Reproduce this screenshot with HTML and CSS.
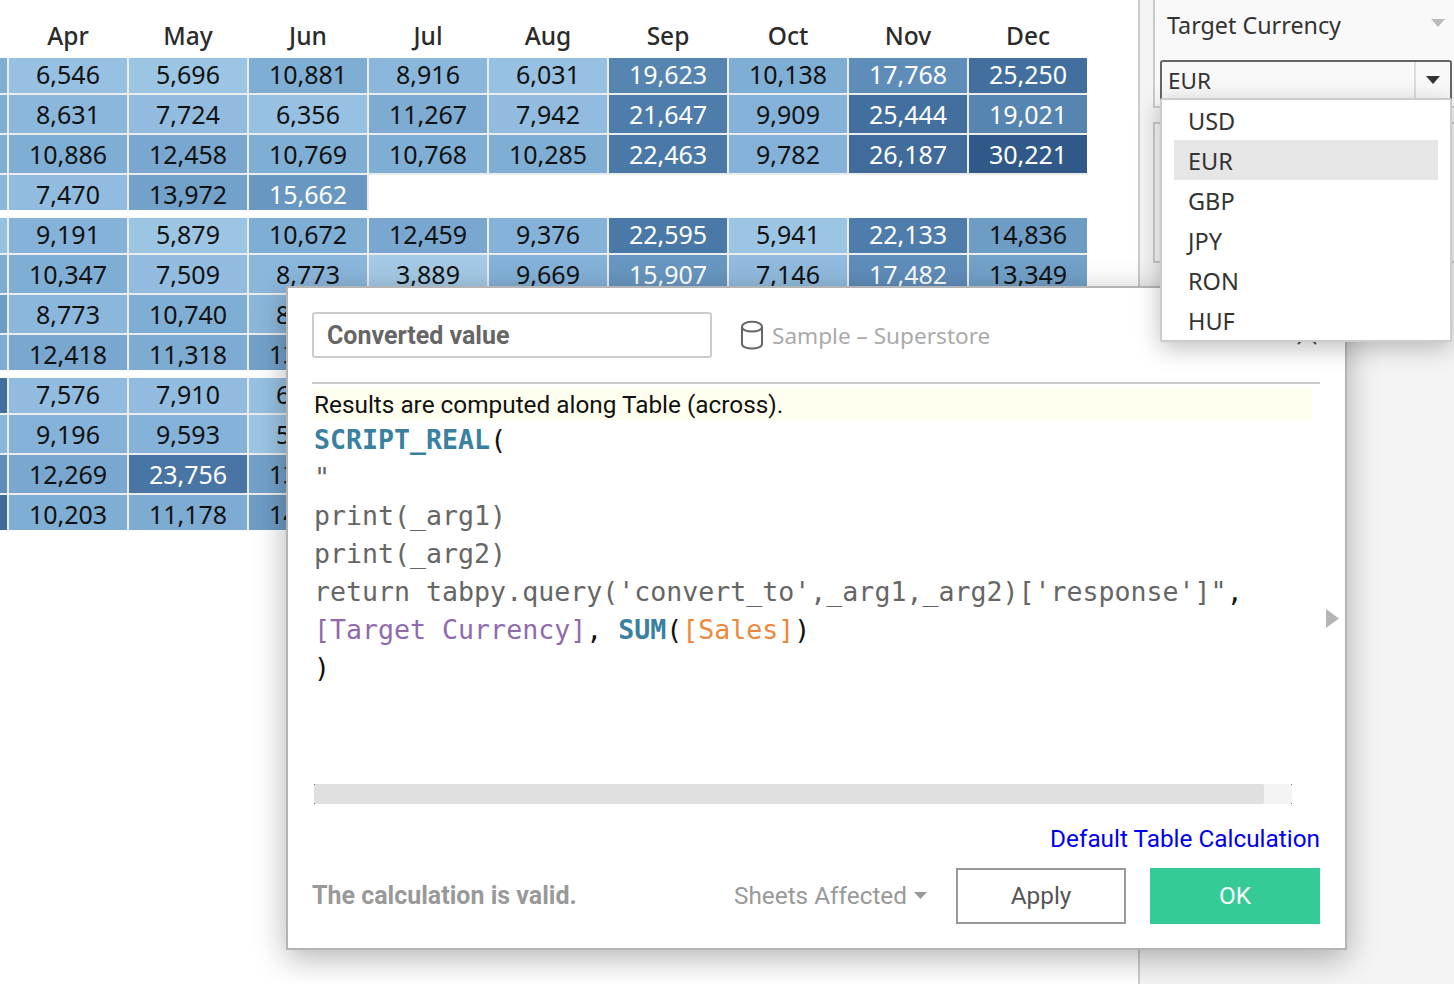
FILE: index.html
```html
<!DOCTYPE html>
<html lang="en">
<head>
<meta charset="utf-8">
<title>Converted value</title>
<link rel="stylesheet" href="styles.css">
</head>
<body>
<div class="app">
  <main class="view">
    <div class="months">
      <span></span><span>Apr</span><span>May</span><span>Jun</span><span>Jul</span><span>Aug</span><span>Sep</span><span>Oct</span><span>Nov</span><span>Dec</span>
    </div>
    <div class="group">
      <div class="top k10"></div><div class="top k6">6,546</div><div class="top k5">5,696</div><div class="top k10">10,881</div><div class="top k8">8,916</div><div class="top k6">6,031</div><div class="top k19">19,623</div><div class="top k10">10,138</div><div class="top k17">17,768</div><div class="top k25">25,250</div>
      <div class="k10"></div><div class="k8">8,631</div><div class="k7">7,724</div><div class="k6">6,356</div><div class="k11">11,267</div><div class="k7">7,942</div><div class="k21">21,647</div><div class="k9">9,909</div><div class="k25">25,444</div><div class="k19">19,021</div>
      <div class="k10"></div><div class="k10">10,886</div><div class="k12">12,458</div><div class="k10">10,769</div><div class="k10">10,768</div><div class="k10">10,285</div><div class="k22">22,463</div><div class="k9">9,782</div><div class="k26">26,187</div><div class="k30">30,221</div>
      <div class="k8"></div><div class="k7">7,470</div><div class="k13">13,972</div><div class="k15">15,662</div><div class="blank"></div>
    </div>
    <div class="group">
      <div class="top k6"></div><div class="top k9">9,191</div><div class="top k5">5,879</div><div class="top k10">10,672</div><div class="top k12">12,459</div><div class="top k9">9,376</div><div class="top k22">22,595</div><div class="top k5">5,941</div><div class="top k21">22,133</div><div class="top k14">14,836</div>
      <div class="k11"></div><div class="k10">10,347</div><div class="k7">7,509</div><div class="k8">8,773</div><div class="k4">3,889</div><div class="k9">9,669</div><div class="k15">15,907</div><div class="k7">7,146</div><div class="k17">17,482</div><div class="k13">13,349</div>
      <div class="k14"></div><div class="k8">8,773</div><div class="k10">10,740</div><div class="k8">8,412</div><div class="blank"></div>
      <div class="k11"></div><div class="k12">12,418</div><div class="k11">11,318</div><div class="k13">13,205</div><div class="blank"></div>
    </div>
    <div class="group">
      <div class="top k25"></div><div class="top k7">7,576</div><div class="top k7">7,910</div><div class="top k6">6,230</div><div class="blank"></div>
      <div class="k8"></div><div class="k9">9,196</div><div class="k9">9,593</div><div class="k5">5,480</div><div class="blank"></div>
      <div class="k17"></div><div class="k12">12,269</div><div class="k23">23,756</div><div class="k13">13,110</div><div class="blank"></div>
      <div class="k26"></div><div class="k10">10,203</div><div class="k11">11,178</div><div class="k14">14,020</div><div class="blank"></div>
    </div>
  </main>

  <aside class="side">
    <section class="card card-param">
      <div class="card-head">
        <span>Target Currency</span>
        <svg class="head-caret" width="14" height="8" viewBox="0 0 14 8"><path d="M0 0h14L7 8z"/></svg>
      </div>
      <div class="select">
        <span class="select-value">EUR</span>
        <span class="select-btn"><svg width="14" height="8" viewBox="0 0 14 8"><path d="M0 0h14L7 8z"/></svg></span>
      </div>
    </section>
    <section class="card card-empty"></section>
  </aside>

  <div class="dialog">
    <svg class="close" width="22" height="22" viewBox="0 0 22 22"><path d="M2 2l18 18M20 2L2 20"/></svg>
    <header class="dialog-head">
      <div class="name-field">Converted value</div>
      <svg class="db-icon" width="24" height="30" viewBox="0 0 24 30"><path d="M2 7c0-7 20-7 20 0v17c0 6-20 6-20 0zM2 7c0 6 20 6 20 0"/></svg>
      <span class="source">Sample – Superstore</span>
    </header>
    <div class="rule"></div>
    <div class="editor">
      <div class="note">Results are computed along Table (across).</div>
      <pre class="code"><b class="fn">SCRIPT_REAL</b><i class="pn">(</i>
"
print(_arg1)
print(_arg2)
return tabpy.query('convert_to',_arg1,_arg2)['response']"<i class="pn">,</i>
<span class="param">[Target Currency]</span><i class="pn">,</i> <b class="fn">SUM</b><i class="pn">(</i><span class="field">[Sales]</span><i class="pn">)</i>
<i class="pn">)</i></pre>
      <svg class="expand" width="13" height="19" viewBox="0 0 13 19"><path d="M0 0l13 9.500L0 19z"/></svg>
    </div>
    <div class="hscroll"><div class="hthumb"></div></div>
    <div class="link-row"><a class="link" href="#">Default Table Calculation</a></div>
    <footer class="dialog-foot">
      <span class="status">The calculation is valid.</span>
      <span class="sheets">Sheets Affected<svg width="13" height="7" viewBox="0 0 13 7"><path d="M0 0h13L6.500 7z"/></svg></span>
      <button class="btn btn-apply">Apply</button>
      <button class="btn btn-ok">OK</button>
    </footer>
  </div>

  <ul class="menu">
    <li>USD</li>
    <li class="current">EUR</li>
    <li>GBP</li>
    <li>JPY</li>
    <li>RON</li>
    <li>HUF</li>
  </ul>
</div>
</body>
</html>
```
FILE: styles.css
```css
* { box-sizing: border-box; }
html, body { margin: 0; padding: 0; }
body {
  width: 1454px;
  height: 984px;
  overflow: hidden;
  background: #fff;
  font-family: "Noto Sans", "Open Sans", sans-serif;
  font-size: 25px;
  color: #111;
}
.app { position: relative; display: flex; width: 1454px; height: 984px; overflow: hidden; }

/* worksheet */
.view { width: 1140px; flex: none; border-right: 2px solid #ccc; }
.months,
.group {
  display: grid;
  grid-template-columns: 7px repeat(9, 118px);
  column-gap: 2px;
  width: max-content;
}
.months { height: 58px; padding-top: 16px; }
.months span { text-align: center; line-height: 40px; font-size: 24.500px; font-weight: 500; color: #2b2b2b; }
.group {
  grid-template-rows: 35px 38px 38px 35px;
  row-gap: 2px;
  background: #ececec;
  margin-bottom: 8px;
}
.group > div {
  padding-top: 4px;
  text-align: center;
  line-height: 30px;
}
.group > .top { padding-top: 1px; }
.group > .blank { grid-column: span 6; background: #fff; }

.k4 { background: #a5cae6; }
.k5 { background: #9cc5e4; }
.k6 { background: #97c1e2; }
.k7 { background: #91bcdf; }
.k8 { background: #8bb7dc; }
.k9 { background: #84b2d9; }
.k10 { background: #7faed5; }
.k11 { background: #7dabd2; }
.k12 { background: #79a7cf; }
.k13 { background: #72a1c9; }
.k14 { background: #6d9cc5; }
.k15 { background: #6897c1; }
.k17 { background: #5f8dba; }
.k19 { background: #5785b2; }
.k21 { background: #4f7dab; }
.k22 { background: #4b79a7; }
.k23 { background: #4875a4; }
.k25 { background: #436f9f; }
.k26 { background: #406b9b; }
.k30 { background: #30598a; }
.k15, .k17, .k19, .k21, .k22, .k23, .k25, .k26, .k30 { color: #fff; }

/* side panel */
.side { flex: 1; background: #f4f4f4; padding-left: 13px; margin-left: 0; }
.card { background: #f9f9f9; border: 2px solid #ccc; border-right: 0; }
.card-param { height: 110px; margin-top: -2px; padding: 0 0 0 5px; }
.card-empty { height: 141px; margin-top: 14px; }
.card-head {
  display: flex;
  align-items: center;
  justify-content: space-between;
  height: 52px;
  padding: 0 9px 2px 7px;
  color: #333;
  font-size: 23.300px;
}
.head-caret { fill: #bbb; margin-bottom: 4px; }
.select {
  display: flex;
  width: 292px;
  height: 46px;
  margin-top: 8px;
  border: 2px solid #666;
  border-radius: 3px;
  background: #f9f9f9;
  line-height: 38px;
  font-size: 22.500px;
  color: #333;
}
.select-value { flex: 1; padding-left: 6px; }
.select-btn {
  width: 36px;
  border-left: 2px solid #ddd;
  display: flex;
  justify-content: center;
  padding-top: 14px;
}
.select-btn svg { fill: #333; margin-right: 0; }

/* calculation dialog */
.dialog {
  position: absolute;
  left: 286px;
  top: 286px;
  width: 1061px;
  height: 664px;
  padding: 24px 25px 24px 24px;
  background: #fff;
  border: 2px solid #b4b4b4;
  box-shadow: 0 8px 30px rgba(0, 0, 0, .3);
  display: flex;
  flex-direction: column;
  font-family: Roboto, "Noto Sans", sans-serif;
  font-size: 24.350px;
}
.close { position: absolute; left: 1008px; top: 36px; stroke: #555; stroke-width: 2; fill: none; }
.dialog-head { display: flex; align-items: center; height: 46px; }
.name-field {
  width: 400px;
  height: 46px;
  padding-left: 13px;
  border: 2px solid #ccc;
  border-radius: 3px;
  line-height: 44px;
  font-size: 25px;
  font-weight: 700;
  color: #666;
}
.db-icon { margin-left: 28px; fill: none; stroke: #666; stroke-width: 2; }
.source { margin-left: 8px; color: #aaa; font-family: "Noto Sans", sans-serif; font-size: 22.600px; }
.rule { height: 2px; margin-top: 24px; background: #ccc; }
.editor { position: relative; flex: none; height: 400px; padding: 4px 0 0 2px; }
.note { width: 998px; height: 32px; background: #ffffef; line-height: 33px; color: #111; }
.code {
  margin: 1px 0 0;
  font-family: "DejaVu Sans Mono", monospace;
  font-size: 26.600px;
  line-height: 38px;
  color: #666;
}
.fn { color: #3a80a0; font-weight: 700; }
.pn { color: #111; font-style: normal; }
.param { color: #8f6bae; }
.field { color: #f0883a; }
.expand { position: absolute; left: 1014px; top: 225px; fill: #b5b5b5; }
.hscroll { position: relative; width: 978px; height: 20px; margin-left: 2px; background: #f4f4f4; }
.hscroll::after {
  content: "";
  position: absolute;
  inset: 0;
  background:
    linear-gradient(#777, #777) left top / 1px 1px no-repeat,
    linear-gradient(#777, #777) left bottom / 1px 1px no-repeat,
    linear-gradient(#777, #777) right top / 1px 1px no-repeat,
    linear-gradient(#777, #777) right bottom / 1px 1px no-repeat;
}
.hthumb { width: 950px; height: 20px; background: #e0e0e0; border-radius: 0 2px 2px 0; }
.link-row { margin-top: 20px; text-align: right; line-height: 30px; }
.link { color: #0000ee; text-decoration: none; }
.dialog-foot { display: flex; align-items: center; height: 56px; margin-top: 14px; }
.status { font-size: 25px; font-weight: 700; color: #999; flex: 1; padding-bottom: 2px; }
.sheets { display: flex; align-items: center; color: #999; margin-right: 29px; padding-bottom: 2px; }
.sheets svg { fill: #999; margin-left: 7px; }
.btn {
  width: 170px;
  height: 56px;
  font: inherit;
  padding: 0 0 2px;
}
.btn-apply { background: #fff; border: 2px solid #999; color: #555; margin-right: 24px; }
.btn-ok { background: #34cb97; border: 0; color: #fff; }

/* open dropdown */
.menu {
  position: absolute;
  left: 1160px;
  top: 98px;
  width: 292px;
  height: 244px;
  margin: 0;
  padding: 0 12px;
  list-style: none;
  background: #fff;
  border: 2px solid #ccc;
  border-radius: 2px;
  box-shadow: 0 6px 24px rgba(0, 0, 0, .25);
  color: #333;
  font-size: 23.500px;
}
.menu li { height: 40px; line-height: 42px; padding-left: 14px; }
.menu .current { background: #e6e6e6; }
```
